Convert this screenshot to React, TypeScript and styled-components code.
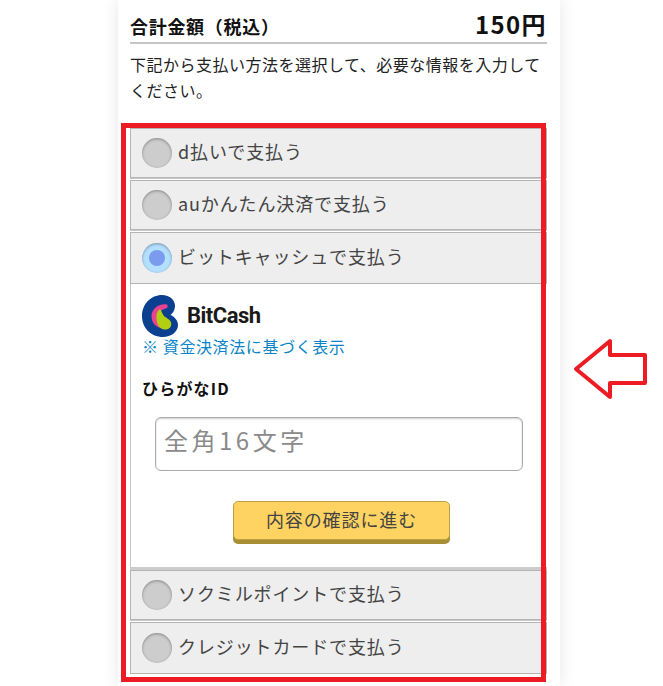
import { FC } from "react";
import styled, { createGlobalStyle } from "styled-components";

const JP = `"Noto Sans CJK JP", "Noto Sans", sans-serif`;

const GlobalStyle = createGlobalStyle`
  html, body {
    margin: 0;
    padding: 0;
    background: #fff;
    overflow: hidden;
  }
`;

const BitCashLogo: FC = () => (
  <svg width="36" height="42" viewBox="0 0 36 42">
    <path
      d="M20 0C28 0 33 5 33 11C33 15 31 18 28.500 20C33 22 36 26 36 30C36 37 29 42 21 42C9 42 0 33 0 21C0 9 9 0 20 0Z"
      fill="#0b3f8f"
    />
    <path
      d="M25 9.500C26 10 26 13 24 13.500C19 14.500 16 18 16 22C16 26 17 30 19 33C13 32 9.500 27 9.500 21C9.500 14 17 8 25 9.500Z"
      fill="#e9428f"
    />
    <path
      d="M18 14C14 17 14 22 15 27C16 32 20 35 24 34.500C28 34 30 31 29 27.500C28 24 24 23 22 21C20 19 20 16 18 14Z"
      fill="#b3cf12"
    />
  </svg>
);

const Arrow: FC = () => (
  <ArrowIcon width="76" height="62" viewBox="0 0 76 62">
    <path
      d="M3 31L37 3V17H72V45H37V59Z"
      fill="none"
      stroke="#ed1c24"
      strokeWidth="4"
      strokeLinejoin="round"
    />
  </ArrowIcon>
);

interface MethodProps {
  label: string;
  selected?: boolean;
}

const Method: FC<MethodProps> = ({ label, selected }) => (
  <MethodRow $selected={selected}>
    <Radio $selected={selected} />
    <MethodLabel>{label}</MethodLabel>
  </MethodRow>
);

export default function App() {
  return (
    <Page>
      <GlobalStyle />
      <Column>
        <TotalRow>
          <TotalLabel>合計金額（税込）</TotalLabel>
          <TotalPrice>150円</TotalPrice>
        </TotalRow>
        <Lead>下記から支払い方法を選択して、必要な情報を入力してください。</Lead>
        <Accordion>
          <Method label="d払いで支払う" />
          <Method label="auかんたん決済で支払う" />
          <Method label="ビットキャッシュで支払う" selected />
          <Panel>
            <Brand>
              <BitCashLogo />
              <BrandName>BitCash</BrandName>
            </Brand>
            <NoticeLink>※ 資金決済法に基づく表示</NoticeLink>
            <FieldLabel>ひらがなID</FieldLabel>
            <FieldInput placeholder="全角16文字" />
            <SubmitButton>内容の確認に進む</SubmitButton>
          </Panel>
          <Method label="ソクミルポイントで支払う" />
          <Method label="クレジットカードで支払う" />
        </Accordion>
      </Column>
      <Highlight />
      <Arrow />
    </Page>
  );
}

const Page = styled.div`
  position: relative;
  width: 663px;
  height: 686px;
  overflow: hidden;
  font-family: ${JP};
  color: #222;
`;

const Column = styled.div`
  box-sizing: border-box;
  width: 442px;
  height: 686px;
  margin-left: 118px;
  padding: 0 13px 0 12px;
  background: #fff;
  box-shadow: 0 0 16px rgba(0, 0, 0, 0.1);
`;

const TotalRow = styled.div`
  display: flex;
  justify-content: space-between;
  align-items: flex-end;
  height: 42px;
  border-bottom: 2px solid #c6c6c6;
`;

const TotalLabel = styled.div`
  font-size: 18px;
  line-height: 32px;
  font-weight: 700;
  letter-spacing: 0.7px;
  color: #111;
`;

const TotalPrice = styled.div`
  font-size: 24px;
  line-height: 36px;
  font-weight: 700;
  letter-spacing: 1.4px;
  color: #111;
`;

const Lead = styled.p`
  margin: 7px 0 0;
  height: 77px;
  font-size: 16px;
  line-height: 26px;
  letter-spacing: 0.5px;
  color: #222;
`;

const Accordion = styled.div`
  display: flex;
  flex-direction: column;
`;

const MethodRow = styled.div<{ $selected?: boolean }>`
  box-sizing: border-box;
  display: flex;
  align-items: center;
  gap: 6px;
  height: ${(p) => (p.$selected ? "52px" : "50px")};
  margin-bottom: ${(p) => (p.$selected ? "0" : "2px")};
  padding-left: 11px;
  background: #eee;
  border: 1px solid #b4b4b4;
  box-shadow: ${(p) => (p.$selected ? "none" : "0 1px 0 #c8c8c8")};

  &:last-child {
    height: 52px;
    box-shadow: none;
  }
`;

const Radio = styled.span<{ $selected?: boolean }>`
  box-sizing: border-box;
  position: relative;
  flex: none;
  width: 30px;
  height: 30px;
  border-radius: 50%;
  background: ${(p) => (p.$selected ? "#b4e0ff" : "#cdcdcd")};
  box-shadow: inset 0 1px 3px rgba(0, 0, 0, 0.35);

  &::after {
    content: "";
    display: ${(p) => (p.$selected ? "block" : "none")};
    position: absolute;
    top: 7px;
    left: 7px;
    width: 16px;
    height: 16px;
    border-radius: 50%;
    background: #7b9bee;
  }
`;

const MethodLabel = styled.span`
  padding-bottom: 4px;
  font-size: 18px;
  line-height: 26px;
  letter-spacing: 0.88px;
  color: #444;
`;

const Panel = styled.div`
  box-sizing: border-box;
  display: flex;
  flex-direction: column;
  height: 286px;
  padding: 11px 11px 0;
  background: #fff;
  border-left: 1px solid #c8c8c8;
  border-bottom: 3px solid #ccc;
`;

const Brand = styled.div`
  display: flex;
  align-items: center;
  gap: 9px;
  height: 42px;
`;

const BrandName = styled.span`
  font-family: Roboto, "Noto Sans", sans-serif;
  font-size: 22px;
  line-height: 28px;
  font-weight: 700;
  letter-spacing: -0.5px;
  color: #1a1a1a;
`;

const NoticeLink = styled.a`
  margin-top: -1px;
  font-size: 16px;
  line-height: 21px;
  letter-spacing: 0.6px;
  color: #0a84c8;
`;

const FieldLabel = styled.div`
  margin-top: 20px;
  font-size: 16px;
  line-height: 22px;
  font-weight: 700;
  letter-spacing: 1.2px;
  color: #111;
`;

const FieldInput = styled.input`
  box-sizing: border-box;
  width: 368px;
  height: 54px;
  margin: 18px 0 0 13px;
  padding: 0 8px 10px;
  border: 1px solid #aaa;
  border-radius: 6px;
  background: #fff;
  box-shadow: inset 0 1px 2px rgba(0, 0, 0, 0.2);
  font-family: ${JP};
  font-size: 24px;
  letter-spacing: 3.5px;
  outline: none;

  &::placeholder {
    color: #8a8a8a;
    opacity: 1;
  }
`;

const SubmitButton = styled.button`
  box-sizing: border-box;
  align-self: flex-start;
  width: 217px;
  height: 39px;
  margin: 30px 0 0 91px;
  padding: 0 0 3px;
  border: 1px solid #bd9e45;
  border-radius: 5px;
  background: #ffd362;
  box-shadow: 0 4px 0 #a98f33;
  font-family: ${JP};
  font-size: 18px;
  letter-spacing: 0.9px;
  color: #444;
`;

const Highlight = styled.div`
  box-sizing: border-box;
  position: absolute;
  top: 123px;
  left: 121px;
  width: 425px;
  height: 559px;
  border: 5px solid #ed1c24;
`;

const ArrowIcon = styled.svg`
  position: absolute;
  top: 338px;
  left: 573px;
`;
